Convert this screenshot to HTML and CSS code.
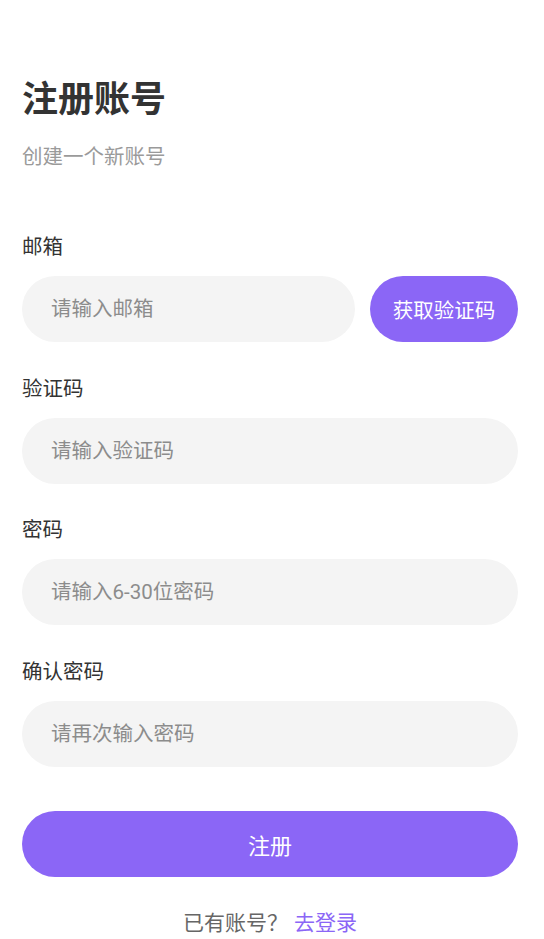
FILE: index.html
```html
<!DOCTYPE html>
<html lang="zh-CN">
<head>
<meta charset="utf-8">
<title>注册账号</title>
<link rel="stylesheet" href="styles.css">
</head>
<body>
<main class="page">
  <h1 class="title">注册账号</h1>
  <p class="subtitle">创建一个新账号</p>

  <form class="form">
    <div class="field">
      <label class="label">邮箱</label>
      <div class="row">
        <input class="input input-grow" type="text" placeholder="请输入邮箱">
        <button class="code-btn" type="button">获取验证码</button>
      </div>
    </div>
    <div class="field">
      <label class="label">验证码</label>
      <input class="input" type="text" placeholder="请输入验证码">
    </div>
    <div class="field">
      <label class="label">密码</label>
      <input class="input" type="password" placeholder="请输入6-30位密码">
    </div>
    <div class="field">
      <label class="label">确认密码</label>
      <input class="input" type="password" placeholder="请再次输入密码">
    </div>
    <button class="submit" type="button">注册</button>
  </form>

  <p class="footer">已有账号？<a class="link" href="#">去登录</a></p>
</main>
</body>
</html>
```
FILE: styles.css
```css
* { box-sizing: border-box; }
html, body { margin: 0; padding: 0; background: #ffffff; }
body {
  font-family: Roboto, "Noto Sans CJK SC", "Noto Sans", sans-serif;
  color: #333333;
}
.page {
  padding: 78px 26px 0 22px;
}
.title {
  margin: 0;
  font-size: 36px;
  line-height: 44px;
  font-weight: 700;
  color: #333333;
}
.subtitle {
  margin: 21px 0 0;
  font-size: 20.5px;
  line-height: 28px;
  color: #9a9a9a;
}
.form {
  margin-top: 62px;
  display: flex;
  flex-direction: column;
}
.field {
  display: flex;
  flex-direction: column;
  margin-bottom: 32.5px;
}
.field:last-of-type { margin-bottom: 0; }
.label {
  font-size: 20.5px;
  line-height: 28px;
  color: #333333;
  margin-bottom: 15px;
}
.row {
  display: flex;
  gap: 15px;
}
.input {
  flex: none;
  width: 100%;
  min-width: 0;
  height: 66px;
  border: none;
  outline: none;
  background: #f4f4f4;
  border-radius: 33px;
  padding: 0 29px;
  font-family: inherit;
  font-size: 20.5px;
  color: #333333;
}
.input-grow {
  flex: 1 1 auto;
  width: auto;
}
.input::placeholder { color: #8c8c8c; }
.code-btn {
  flex: 0 0 148px;
  height: 66px;
  border: none;
  border-radius: 33px;
  background: #8b66f6;
  color: #ffffff;
  font-family: inherit;
  font-size: 20.5px;
  padding: 0;
}
.submit {
  margin-top: 44px;
  height: 66px;
  border: none;
  border-radius: 33px;
  background: #8b66f6;
  color: #ffffff;
  font-family: inherit;
  font-size: 22px;
  padding: 0;
}
.footer {
  margin: 32px 0 0;
  text-align: center;
  font-size: 21px;
  line-height: 28px;
  color: #666666;
}
.link {
  color: #8b66f6;
  text-decoration: none;
  margin-left: 6px;
}
```
